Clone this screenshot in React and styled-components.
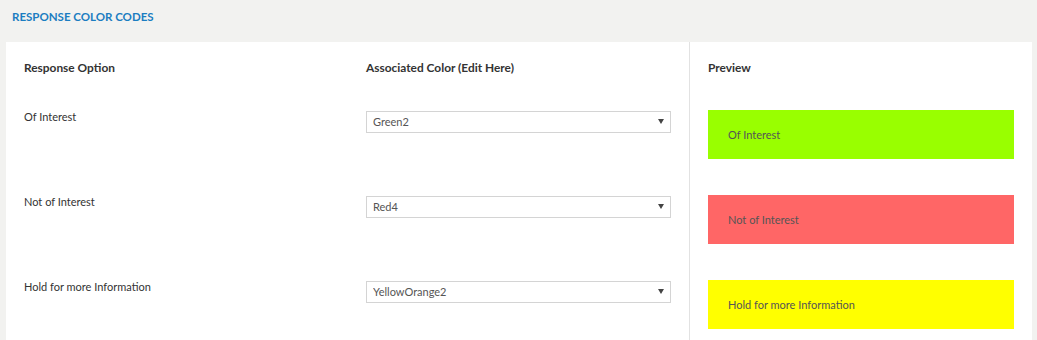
import React from "react";
import styled, { createGlobalStyle } from "styled-components";

const Global = createGlobalStyle`
  html, body { margin: 0; padding: 0; background: #f2f2f0; }
  body { font-family: Lato, "Open Sans", "Liberation Sans", sans-serif; }
`;

const Page = styled.div`
  width: 1037px;
  height: 340px;
  overflow: hidden;
  background: #f2f2f0;
`;

const Title = styled.h2`
  margin: 0;
  padding: 10px 12px 18px;
  font-size: 11.5px;
  line-height: 14px;
  font-weight: 700;
  color: #1b7dc1;
  text-transform: uppercase;
`;

const Card = styled.div`
  margin: 0 5px 0 6px;
  background: #fff;
  display: flex;
  height: 298px;
`;

const LeftPanel = styled.div`
  width: 647px;
  padding: 19px 18px 0;
  border-right: 1px solid #e2e2e2;
  display: grid;
  grid-template-columns: 342px 1fr;
  grid-auto-rows: 85px;
  grid-template-rows: 49px;
`;

const RightPanel = styled.div`
  flex: 1;
  padding: 19px 18px 0;
  display: grid;
  grid-template-rows: 49px;
  grid-auto-rows: 85px;
`;

const Heading = styled.div`
  font-size: 11.9px;
  line-height: 14px;
  font-weight: 700;
  color: #333;
`;

const Label = styled.div`
  font-size: 11px;
  line-height: 14px;
  color: #333;
`;

const SelectWrap = styled.div`
  position: relative;
  height: 22px;
`;

const Select = styled.select`
  appearance: none;
  -webkit-appearance: none;
  width: 100%;
  height: 22px;
  margin: 0;
  padding: 0 20px 0 6px;
  border: 1px solid #d4d4d4;
  border-radius: 0;
  background: #fff;
  font-family: Lato, "Open Sans", "Liberation Sans", sans-serif;
  font-size: 11px;
  color: #555;
  outline: none;
`;

const Arrow = styled.span`
  position: absolute;
  right: 7px;
  top: 9px;
  width: 0;
  height: 0;
  border-left: 3px solid transparent;
  border-right: 3px solid transparent;
  border-top: 5px solid #444;
  pointer-events: none;
`;

const Swatch = styled.div`
  height: 49px;
  background: ${(p) => p.$color};
  display: flex;
  align-items: center;
  padding-left: 20px;
  font-size: 11px;
  color: #555;
`;

const rows = [
  { label: "Of Interest", value: "Green2", color: "#99ff00" },
  { label: "Not of Interest", value: "Red4", color: "#ff6666" },
  { label: "Hold for more Information", value: "YellowOrange2", color: "#ffff00" },
];

export default function App() {
  return (
    <Page>
      <Global />
      <Title>Response Color Codes</Title>
      <Card>
        <LeftPanel>
          <Heading>Response Option</Heading>
          <Heading>Associated Color (Edit Here)</Heading>
          {rows.map((r) => (
            <React.Fragment key={r.label}>
              <Label>{r.label}</Label>
              <div>
                <SelectWrap>
                  <Select defaultValue={r.value}>
                    <option>{r.value}</option>
                  </Select>
                  <Arrow />
                </SelectWrap>
              </div>
            </React.Fragment>
          ))}
        </LeftPanel>
        <RightPanel>
          <Heading>Preview</Heading>
          {rows.map((r) => (
            <div key={r.label}>
              <Swatch $color={r.color}>{r.label}</Swatch>
            </div>
          ))}
        </RightPanel>
      </Card>
    </Page>
  );
}
